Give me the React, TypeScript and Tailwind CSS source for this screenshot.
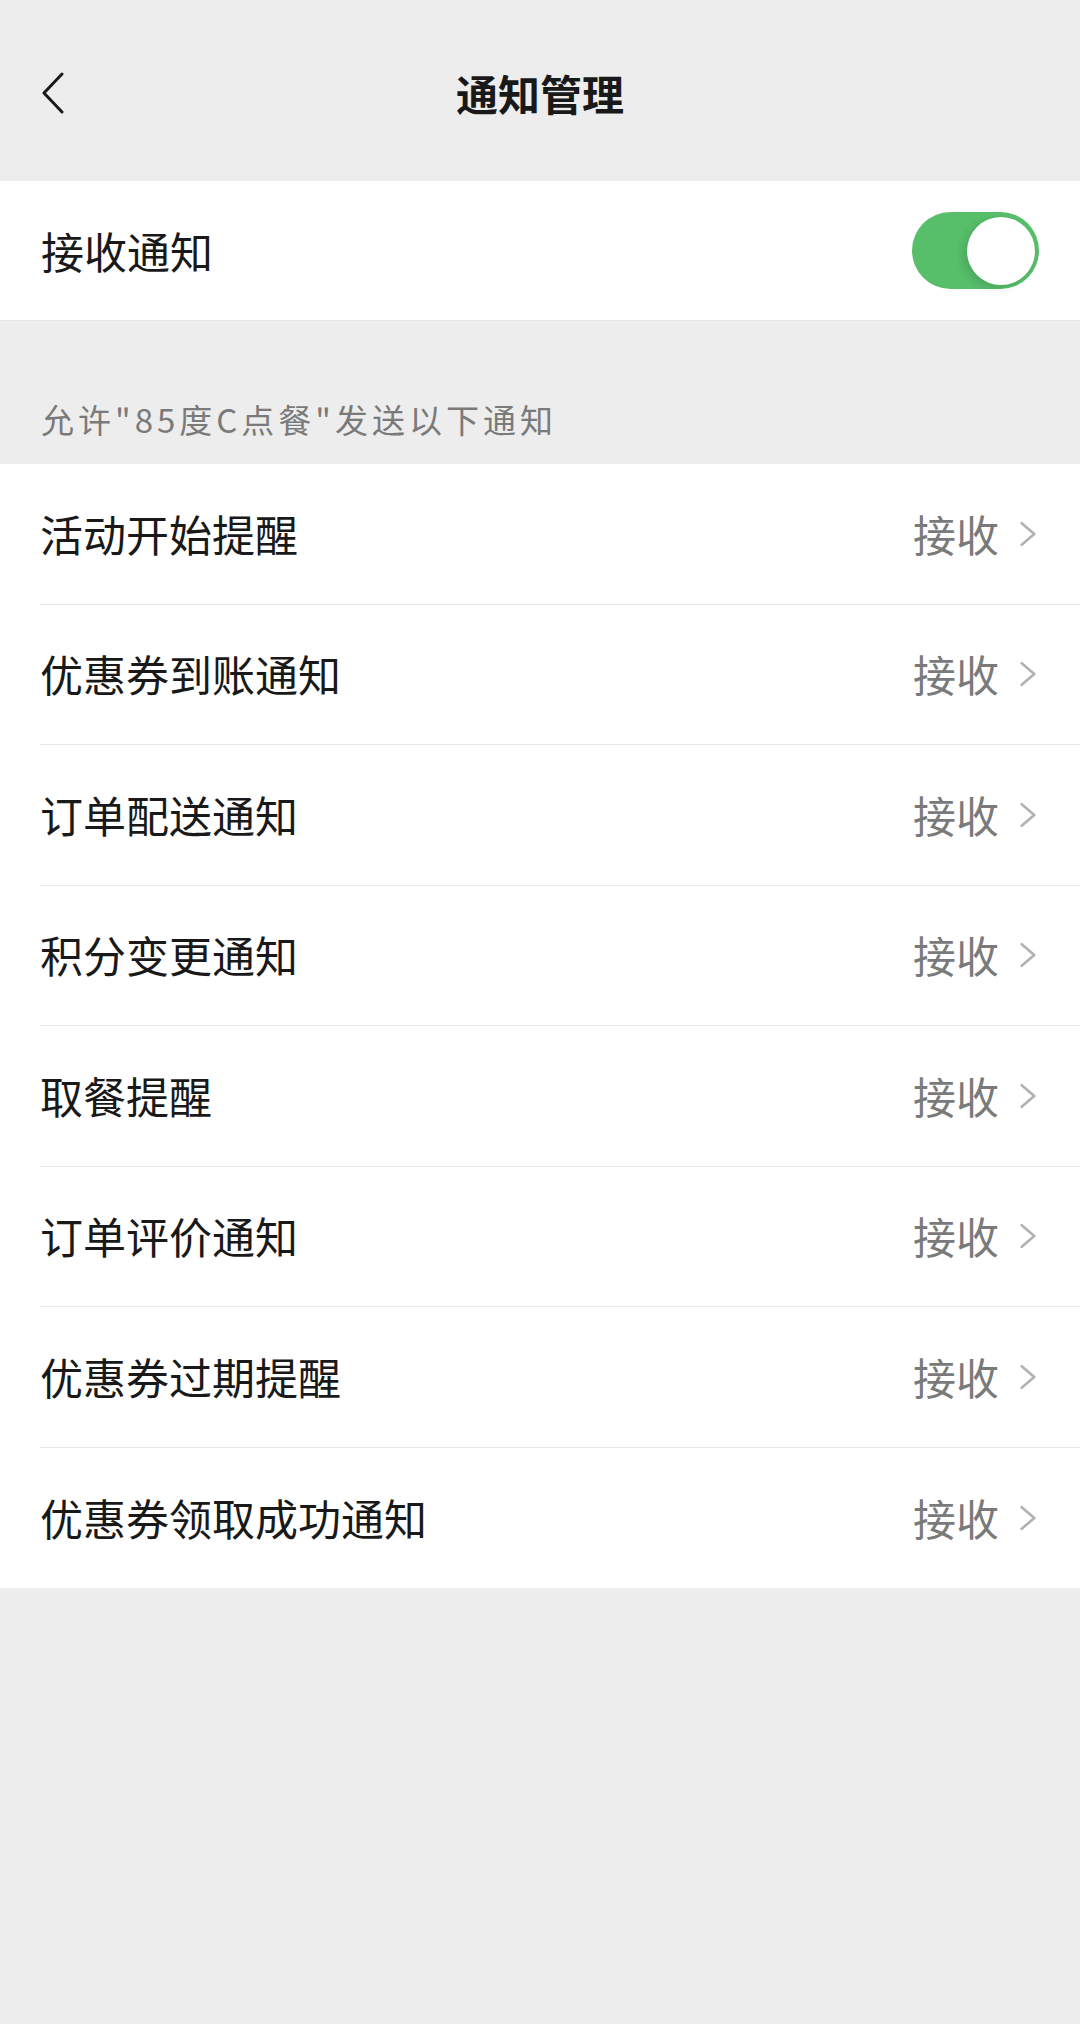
import React from 'react';

const items = [
  '活动开始提醒',
  '优惠券到账通知',
  '订单配送通知',
  '积分变更通知',
  '取餐提醒',
  '订单评价通知',
  '优惠券过期提醒',
  '优惠券领取成功通知',
];

const font = { fontFamily: '"Noto Sans CJK SC", "Noto Sans", sans-serif' };

const Chevron = ({ className }: { className?: string }) => (
  <svg viewBox="0 0 20 28" className={className} fill="none">
    <path d="M3 2 L17 14 L3 26" stroke="currentColor" strokeWidth="3" strokeLinecap="round" strokeLinejoin="round" />
  </svg>
);

const BackIcon = () => (
  <svg viewBox="0 0 26 42" className="w-[26px] h-[42px] text-[#1a1a1a]" fill="none">
    <path d="M22 2 L4 21 L22 40" stroke="currentColor" strokeWidth="3" strokeLinecap="round" strokeLinejoin="round" />
  </svg>
);

const Toggle = () => (
  <div className="relative w-[127px] h-[77px] rounded-full bg-[#57be6a]">
    <div className="absolute right-[4px] top-[5px] w-[68px] h-[68px] rounded-full bg-white shadow-[-4px_3px_8px_rgba(0,0,0,0.12)]" />
  </div>
);

export default function App() {
  return (
    <div className="min-h-[2024px] bg-[#ededed]" style={font}>
      <header className="h-[181px] flex items-center px-[40px] relative">
        <div className="pt-[4px]">
          <BackIcon />
        </div>
        <h1 className="absolute left-0 right-0 text-center text-[42px] font-bold text-[#191919] pt-[4px] pointer-events-none">
          通知管理
        </h1>
      </header>

      <div className="h-[140px] bg-white border-b border-[#e6e6e6] flex items-center justify-between pl-[41px] pr-[41px]">
        <span className="text-[43px] text-[#191919]">接收通知</span>
        <Toggle />
      </div>

      <div className="h-[143px] flex items-end pb-[20px] pl-[41px]">
        <span className="text-[33px] tracking-[4px] text-[#7a7a7a]">允许"85度C点餐"发送以下通知</span>
      </div>

      <ul className="bg-white">
        {items.map((label, i) => (
          <li key={label} className="pl-[40px]">
            <div
              className={
                'h-[140.5px] flex items-center justify-between pr-[43px] ' +
                (i < items.length - 1 ? 'border-b border-[#e8e8e8]' : '')
              }
            >
              <span className="text-[43px] text-[#191919] -mt-[2px]">{label}</span>
              <div className="flex items-center gap-[20px]">
                <span className="text-[43px] text-[#7a7a7a] -mt-[2px]">接收</span>
                <Chevron className="w-[18px] h-[26px] text-[#b2b2b2]" />
              </div>
            </div>
          </li>
        ))}
      </ul>
    </div>
  );
}
